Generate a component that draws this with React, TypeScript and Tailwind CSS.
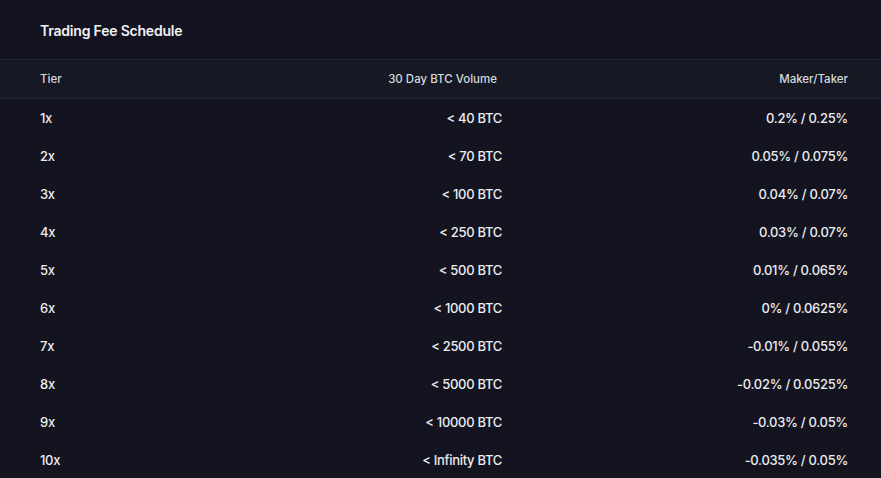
import React from "react";

const rows: [string, string, string][] = [
  ["1x", "< 40 BTC", "0.2% / 0.25%"],
  ["2x", "< 70 BTC", "0.05% / 0.075%"],
  ["3x", "< 100 BTC", "0.04% / 0.07%"],
  ["4x", "< 250 BTC", "0.03% / 0.07%"],
  ["5x", "< 500 BTC", "0.01% / 0.065%"],
  ["6x", "< 1000 BTC", "0% / 0.0625%"],
  ["7x", "< 2500 BTC", "-0.01% / 0.055%"],
  ["8x", "< 5000 BTC", "-0.02% / 0.0525%"],
  ["9x", "< 10000 BTC", "-0.03% / 0.05%"],
  ["10x", "< Infinity BTC", "-0.035% / 0.05%"],
];

export default function App() {
  return (
    <div
      className="w-[881px] h-[478px] overflow-hidden bg-[#13141f] text-[#ececf0]"
      style={{ fontFamily: "Inter, 'Noto Sans', sans-serif" }}
    >
      <div className="h-[59px] flex items-center pl-[40px] pt-[2px]">
        <h1 className="text-[14px] font-semibold text-[#f2f2f5] tracking-[-0.2px]">
          Trading Fee Schedule
        </h1>
      </div>
      <div className="h-[40px] bg-[#161824] border-y border-[#1f2540] grid grid-cols-[200px_262px_1fr] items-center pl-[40px] pr-[33px] pt-[2px] text-[11.5px] font-medium text-[#d6d8de]">
        <div>Tier</div>
        <div className="text-right pr-[5px]">30 Day BTC Volume</div>
        <div className="text-right">Maker/Taker</div>
      </div>
      <div>
        {rows.map(([tier, vol, fee]) => (
          <div
            key={tier}
            className="h-[38px] grid grid-cols-[200px_262px_1fr] items-center pl-[40px] pr-[33px] pt-[2px] text-[13px] font-medium tracking-[-0.3px]"
          >
            <div>{tier}</div>
            <div className="text-right">{vol}</div>
            <div className="text-right">{fee}</div>
          </div>
        ))}
      </div>
    </div>
  );
}
